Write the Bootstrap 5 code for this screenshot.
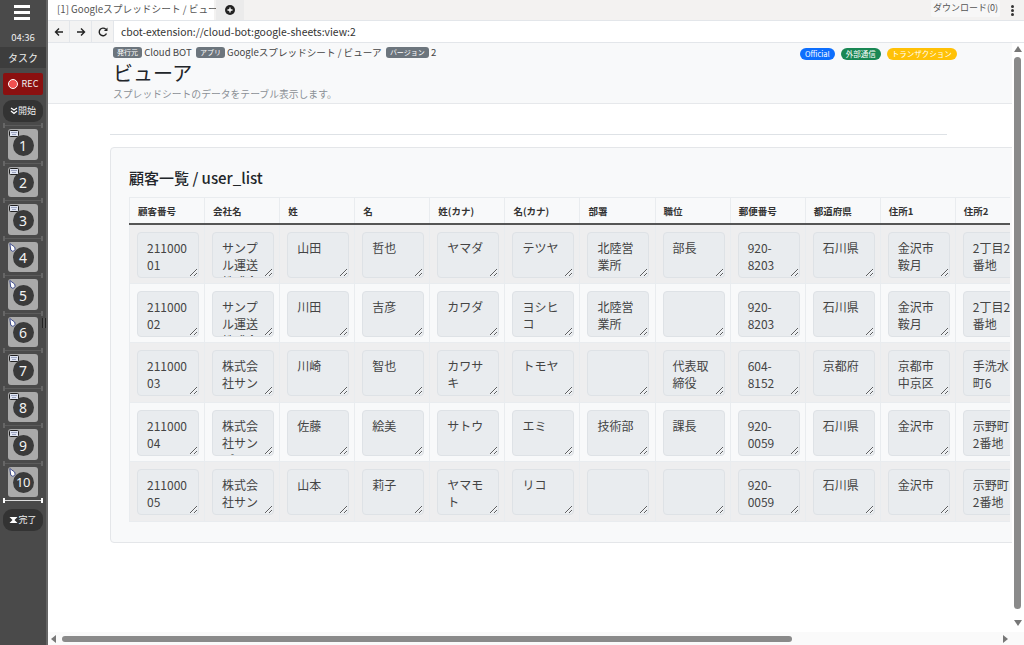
<!DOCTYPE html>
<html lang="ja">
<head>
  <meta charset="UTF-8" />
  <meta name="viewport" content="width=device-width, initial-scale=1" />
  <title>Cloud BOT ビューア</title>
  <link href="https://cdn.jsdelivr.net/npm/bootstrap@5.3.0/dist/css/bootstrap.min.css" rel="stylesheet" />
  <style>
    html, body { height: 100%; margin: 0; overflow: hidden; }
    body { font-family: "Noto Sans CJK JP", "Noto Sans", sans-serif; color: #212529; }

    /* side panel */
    .side-panel { width: 48px; height: 645px; background: #4a4a4a; border-right: 2px solid #666; color: #eee; flex: none; }
    .burger { height: 30px; padding-top: 5px; }
    .burger i { display: block; width: 16px; height: 3px; background: #fff; margin: 0 0 3px 14px; }
    .clock { height: 17px; font-size: 9.5px; line-height: 14px; text-align: center; }
    .task-band { height: 21px; background: #3d3d3d; font-size: 10px; line-height: 21px; text-align: center; }
    .rec-btn { height: 22px; margin: 5px 3px 0; background: #8b1010; border-radius: 2px; font-size: 9px; line-height: 22px; }
    .rec-dot { width: 10px; height: 10px; background: #f05050; border: 1.5px solid #fff; border-radius: 50%; }
    .pill-btn { height: 22px; margin: 5px 3px 0; background: #333; border-radius: 9px; font-size: 9px; line-height: 22px; }
    .step-sep { height: 7px; margin: 0 3px; display: flex; align-items: center; justify-content: space-between; border: 0; }
    .step-sep::before, .step-sep::after { content: ""; width: 2px; height: 5px; background: #666; }
    .step-sep span { flex: 1; height: 1px; background: #5c5c5c; }
    .step-sep.is-last::before, .step-sep.is-last::after { background: #fff; }
    .step-sep.is-last span { background: #ddd; }
    .step-tile { position: relative; width: 30px; height: 30.5px; margin-left: 8px; background: #aaa; border-radius: 3px; }
    .step-num { width: 21px; height: 21px; margin-top: 2px; background: #3a3a3a; border-radius: 50%; color: #f2f2f2; font-size: 14px; line-height: 21px; text-align: center; font-family: "Noto Sans", sans-serif; }
    .step-num.two-digit { font-size: 13px; letter-spacing: -.5px; }
    .step-icon { position: absolute; left: 1px; top: 1px; }
    .grip { position: absolute; left: 42px; top: 318px; width: 4px; height: 10px; border-left: 1px solid #222; border-right: 1px solid #222; background: #555; }

    /* browser-ish chrome */
    .tab-bar { height: 21px; background: #f3f2f1; border-bottom: 1px solid #e3e6ea; font-size: 9.7px; color: #555; }
    .tab-active { width: 166px; height: 20px; background: #fff; line-height: 19px; padding-left: 9px; white-space: nowrap; }
    .tab-add { width: 28px; height: 20px; margin-left: 2px; background: #ebebeb; }
    .dl-btn { width: 69px; height: 17px; background: #f7f7f7; line-height: 15px; text-align: center; font-size: 9px; border-radius: 2px; }
    .dots { width: 24px; }
    .dots i { display: block; width: 3px; height: 3px; margin: 1px auto; background: #333; border-radius: 50%; }
    .addr-bar { height: 22px; border-bottom: 1px solid #e3e6ea; }
    .nav-cell { width: 22px; background: #f3f3f3; border-right: 1px solid #e3e6ea; }
    .addr-text { padding-left: 7px; font-size: 10.4px; line-height: 21px; color: #333; }

    /* page */
    .page-wrap { width: 964px; overflow: hidden; }
    .page-head { height: 61px; padding-left: 65px; background: #f8f9fa; border-bottom: 1px solid #e6e8eb; position: relative; }
    .meta-line { height: 15px; padding-top: 3px; font-size: 9.6px; line-height: 12px; white-space: nowrap; color: #444; }
    .meta-line .badge { font-size: 7px; font-weight: 400; padding: 2px 4px; border-radius: 3px; background: #6c757d; vertical-align: 1px; }
    .page-title { font-size: 20px; line-height: 30px; margin: 0; font-weight: 400; }
    .page-sub { font-size: 9.8px; line-height: 12px; color: #8b9096; }
    .flag-row { position: absolute; top: 5px; left: 752px; display: flex; gap: 6px; }
    .flag-row .badge { font-size: 7.5px; font-weight: 400; height: 12px; line-height: 12px; padding: 0 5px; }
    .flag-row .bg-warning { color: #fff; }
    .head-rule { width: 837px; margin: 30px 0 12px 62px; border-top: 1px solid #dee2e6; opacity: 1; }
    .sheet-card { width: 1000px; height: 396px; margin-left: 62px; background: #f8f9fa; border: 1px solid #e4e6e9; border-radius: 4px; padding: 17px 0 0 18px; }
    .sheet-title { font-size: 15px; line-height: 26px; font-weight: 500; margin: 0 0 6px; }
    .sheet-clip { width: 881px; overflow: hidden; }
    .sheet-table { width: 902px; table-layout: fixed; margin: 0; border-color: #e9ecef; }
    .sheet-table th { height: 26px; padding: 0 8px; font-size: 9.5px; line-height: 24px; background: #f8f9fa; font-weight: 700; color: #333; border-bottom: 2px solid #555; }
    .sheet-table td { padding: 7px 7px 0 7px; height: 59.5px; }
    .sheet-table tbody tr:nth-child(odd) td { background: #eeeeef; }
    .sheet-table tbody tr:nth-child(even) td { background: #f8f9fa; }
    .cell-box { display: block; width: 62px; height: 46px; padding: 6px 9px; font-size: 12px; line-height: 17.3px; background: #e9ecef; border-color: #dee2e6; color: #444; overflow: hidden; border-radius: 4px; }

    /* scrollbars */
    .v-scroll { width: 12px; position: relative; background: #fff; }
    .v-thumb { position: absolute; left: 2px; top: 14px; width: 7px; height: 552px; background: #8a8a8a; border-radius: 4px; }
    .h-scroll { height: 13px; background: #fafafa; position: relative; }
    .h-thumb { position: absolute; left: 14px; top: 4px; width: 730px; height: 6px; background: #8a8a8a; border-radius: 3px; }
    .arr { position: absolute; width: 0; height: 0; border-style: solid; border-color: transparent; }
    .arr-up { left: 2px; top: 3px; border-width: 0 4px 6px; border-bottom-color: #777; }
    .arr-down { left: 2px; top: 577px; border-width: 6px 4px 0; border-top-color: #777; }
    .arr-left { left: 3px; top: 3px; border-width: 4px 5px 4px 0; border-right-color: #777; }
    .arr-right { left: 955px; top: 3px; border-width: 4px 0 4px 5px; border-left-color: #777; }
  </style>
</head>
<body class="d-flex">

  <svg width="0" height="0" class="position-absolute">
    <symbol id="ic-key" viewBox="0 0 10 7"><rect x=".5" y=".5" width="9" height="6" rx="1" fill="#dfe4f2" stroke="#222"/><path d="M2 2.5h6M3 4.5h4" stroke="#8890b0" stroke-width=".8"/></symbol>
    <symbol id="ic-mouse" viewBox="0 0 8 10"><path d="M1 .5 6.5 4.5 7 7.5 4.5 9.5 2 8 1 .5z" fill="#fff" stroke="#2b3a80" stroke-width="1"/></symbol>
  </svg>

  <!-- Side panel -->
  <aside class="side-panel position-relative">
    <div class="burger"><i></i><i></i><i></i></div>
    <div class="clock">04:36</div>
    <div class="task-band">タスク</div>
    <div class="rec-btn d-flex justify-content-center align-items-center gap-1"><span class="rec-dot"></span>REC</div>
    <div class="pill-btn d-flex justify-content-center align-items-center">
      <svg width="8" height="8" viewBox="0 0 8 8"><path d="M1 1l3 2 3-2M1 4l3 2.500 3-2.500" fill="none" stroke="#fff" stroke-width="1.300"/></svg>開始
    </div>
    <div id="steps"></div>
    <div class="pill-btn d-flex justify-content-center align-items-center">
      <svg width="9" height="8" viewBox="0 0 9 8"><path d="M.5 1h8L5.500 4l3 3h-8l3-3z" fill="#fff"/></svg>完了
    </div>
    <div class="grip"></div>
  </aside>

  <div class="d-flex flex-column flex-grow-1">
    <!-- Tabs -->
    <div class="tab-bar d-flex">
      <div class="tab-active">[1] Googleスプレッドシート / ビュー</div>
      <div class="tab-add d-flex justify-content-center align-items-center">
        <svg width="10" height="10" viewBox="0 0 10 10"><circle cx="5" cy="5" r="5" fill="#222"/><path d="M5 2.500v5M2.500 5h5" stroke="#fff" stroke-width="1.300"/></svg>
      </div>
      <div class="ms-auto dl-btn">ダウンロード(0)</div>
      <div class="dots pt-1"><i></i><i></i><i></i></div>
    </div>

    <!-- Address bar -->
    <div class="addr-bar d-flex">
      <div class="nav-cell d-flex justify-content-center align-items-center">
        <svg width="10" height="10" viewBox="0 0 10 10"><path d="M9 5H1.500M5 1.500 1.500 5 5 8.500" fill="none" stroke="#222" stroke-width="1.400"/></svg>
      </div>
      <div class="nav-cell d-flex justify-content-center align-items-center">
        <svg width="10" height="10" viewBox="0 0 10 10"><path d="M1 5h7.500M5 1.500 8.500 5 5 8.500" fill="none" stroke="#222" stroke-width="1.400"/></svg>
      </div>
      <div class="nav-cell d-flex justify-content-center align-items-center">
        <svg width="10" height="10" viewBox="0 0 10 10"><path d="M8.500 6.500A3.800 3.800 0 1 1 7.800 2.300" fill="none" stroke="#222" stroke-width="1.400"/><path d="M9.500.5v3.600H5.900z" fill="#222"/></svg>
      </div>
      <div class="addr-text">cbot-extension://cloud-bot:google-sheets:view:2</div>
    </div>

    <div class="d-flex flex-grow-1 overflow-hidden">
      <div class="page-wrap">
        <header class="page-head">
          <div class="meta-line">
            <span class="badge">発行元</span> Cloud BOT &nbsp;<span class="badge">アプリ</span> Googleスプレッドシート / ビューア &nbsp;<span class="badge">バージョン</span> 2
          </div>
          <h1 class="page-title">ビューア</h1>
          <div class="page-sub">スプレッドシートのデータをテーブル表示します。</div>
          <div class="flag-row">
            <span class="badge bg-primary">Official</span>
            <span class="badge bg-success">外部通信</span>
            <span class="badge bg-warning">トランザクション</span>
          </div>
        </header>

        <hr class="head-rule" />

        <section class="sheet-card">
          <h2 class="sheet-title">顧客一覧 / user_list</h2>
          <div class="sheet-clip">
            <table class="table table-bordered sheet-table">
              <thead id="sheet-head"></thead>
              <tbody id="sheet-body"></tbody>
            </table>
          </div>
        </section>
      </div>

      <div class="v-scroll">
        <span class="arr arr-up"></span>
        <div class="v-thumb"></div>
        <span class="arr arr-down"></span>
      </div>
    </div>

    <div class="h-scroll">
      <span class="arr arr-left"></span>
      <div class="h-thumb"></div>
      <span class="arr arr-right"></span>
    </div>
  </div>

  <script src="https://cdn.jsdelivr.net/npm/bootstrap@5.3.0/dist/js/bootstrap.bundle.min.js"></script>
  <script>
    const stepIcons = ["key", "key", "key", "mouse", "mouse", "mouse", "key", "key", "key", "mouse"];
    document.getElementById("steps").innerHTML = stepIcons.map((icon, i) => {
      const size = icon === "key" ? 'width="10" height="7"' : 'width="7" height="9"';
      return `<div class="step-sep${i === 0 ? "" : ""}"><span></span></div>
        <div class="step-tile d-flex justify-content-center align-items-center">
          <div class="step-num${i === 9 ? " two-digit" : ""}">${i + 1}</div>
          <svg class="step-icon" ${size}><use href="#ic-${icon}"/></svg>
        </div>`;
    }).join("") + '<div class="step-sep is-last"><span></span></div>';

    const columns = ["顧客番号", "会社名", "姓", "名", "姓(カナ)", "名(カナ)", "部署", "職位", "郵便番号", "都道府県", "住所1", "住所2"];
    const rows = [
      ["21100001", "サンプル運送株式会社", "山田", "哲也", "ヤマダ", "テツヤ", "北陸営業所", "部長", "920-8203", "石川県", "金沢市鞍月", "2丁目2番地"],
      ["21100002", "サンプル運送株式会社", "川田", "吉彦", "カワダ", "ヨシヒコ", "北陸営業所", "", "920-8203", "石川県", "金沢市鞍月", "2丁目2番地"],
      ["21100003", "株式会社サンプル", "川崎", "智也", "カワサキ", "トモヤ", "", "代表取締役", "604-8152", "京都府", "京都市中京区", "手洗水町6"],
      ["21100004", "株式会社サンプル", "佐藤", "絵美", "サトウ", "エミ", "技術部", "課長", "920-0059", "石川県", "金沢市", "示野町2番地"],
      ["21100005", "株式会社サンプル", "山本", "莉子", "ヤマモト", "リコ", "", "", "920-0059", "石川県", "金沢市", "示野町2番地"]
    ];
    document.getElementById("sheet-head").innerHTML = "<tr>" + columns.map(c => `<th>${c}</th>`).join("") + "</tr>";
    document.getElementById("sheet-body").innerHTML = rows.map(r =>
      "<tr>" + r.map(v => `<td><textarea class="form-control cell-box" readonly>${v}</textarea></td>`).join("") + "</tr>"
    ).join("");
  </script>
</body>
</html>
